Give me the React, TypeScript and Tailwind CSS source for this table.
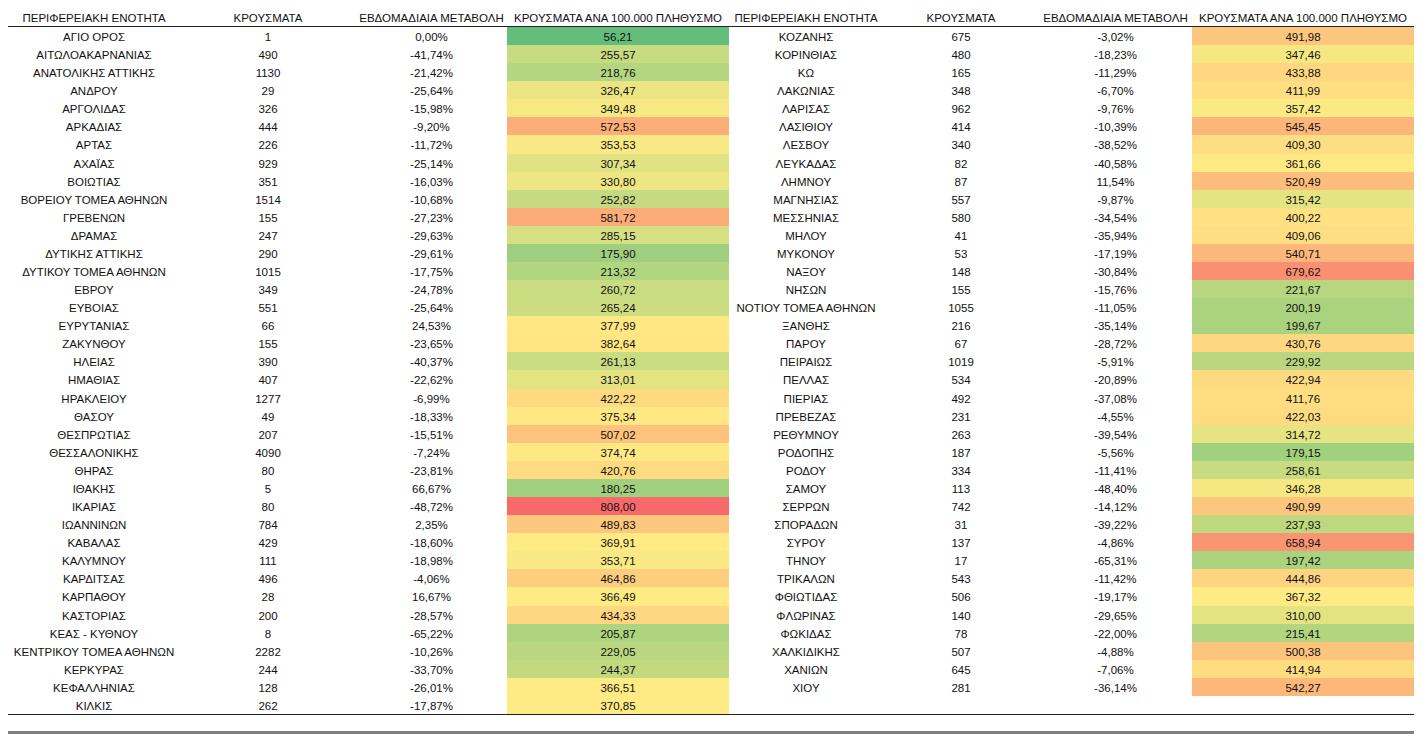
type Row = [string, number, string, string];

const left: Row[] = [
  ["ΑΓΙΟ ΟΡΟΣ", 1, "0,00%", "56,21"],
  ["ΑΙΤΩΛΟΑΚΑΡΝΑΝΙΑΣ", 490, "-41,74%", "255,57"],
  ["ΑΝΑΤΟΛΙΚΗΣ ΑΤΤΙΚΗΣ", 1130, "-21,42%", "218,76"],
  ["ΑΝΔΡΟΥ", 29, "-25,64%", "326,47"],
  ["ΑΡΓΟΛΙΔΑΣ", 326, "-15,98%", "349,48"],
  ["ΑΡΚΑΔΙΑΣ", 444, "-9,20%", "572,53"],
  ["ΑΡΤΑΣ", 226, "-11,72%", "353,53"],
  ["ΑΧΑΪΑΣ", 929, "-25,14%", "307,34"],
  ["ΒΟΙΩΤΙΑΣ", 351, "-16,03%", "330,80"],
  ["ΒΟΡΕΙΟΥ ΤΟΜΕΑ ΑΘΗΝΩΝ", 1514, "-10,68%", "252,82"],
  ["ΓΡΕΒΕΝΩΝ", 155, "-27,23%", "581,72"],
  ["ΔΡΑΜΑΣ", 247, "-29,63%", "285,15"],
  ["ΔΥΤΙΚΗΣ ΑΤΤΙΚΗΣ", 290, "-29,61%", "175,90"],
  ["ΔΥΤΙΚΟΥ ΤΟΜΕΑ ΑΘΗΝΩΝ", 1015, "-17,75%", "213,32"],
  ["ΕΒΡΟΥ", 349, "-24,78%", "260,72"],
  ["ΕΥΒΟΙΑΣ", 551, "-25,64%", "265,24"],
  ["ΕΥΡΥΤΑΝΙΑΣ", 66, "24,53%", "377,99"],
  ["ΖΑΚΥΝΘΟΥ", 155, "-23,65%", "382,64"],
  ["ΗΛΕΙΑΣ", 390, "-40,37%", "261,13"],
  ["ΗΜΑΘΙΑΣ", 407, "-22,62%", "313,01"],
  ["ΗΡΑΚΛΕΙΟΥ", 1277, "-6,99%", "422,22"],
  ["ΘΑΣΟΥ", 49, "-18,33%", "375,34"],
  ["ΘΕΣΠΡΩΤΙΑΣ", 207, "-15,51%", "507,02"],
  ["ΘΕΣΣΑΛΟΝΙΚΗΣ", 4090, "-7,24%", "374,74"],
  ["ΘΗΡΑΣ", 80, "-23,81%", "420,76"],
  ["ΙΘΑΚΗΣ", 5, "66,67%", "180,25"],
  ["ΙΚΑΡΙΑΣ", 80, "-48,72%", "808,00"],
  ["ΙΩΑΝΝΙΝΩΝ", 784, "2,35%", "489,83"],
  ["ΚΑΒΑΛΑΣ", 429, "-18,60%", "369,91"],
  ["ΚΑΛΥΜΝΟΥ", 111, "-18,98%", "353,71"],
  ["ΚΑΡΔΙΤΣΑΣ", 496, "-4,06%", "464,86"],
  ["ΚΑΡΠΑΘΟΥ", 28, "16,67%", "366,49"],
  ["ΚΑΣΤΟΡΙΑΣ", 200, "-28,57%", "434,33"],
  ["ΚΕΑΣ - ΚΥΘΝΟΥ", 8, "-65,22%", "205,87"],
  ["ΚΕΝΤΡΙΚΟΥ ΤΟΜΕΑ ΑΘΗΝΩΝ", 2282, "-10,26%", "229,05"],
  ["ΚΕΡΚΥΡΑΣ", 244, "-33,70%", "244,37"],
  ["ΚΕΦΑΛΛΗΝΙΑΣ", 128, "-26,01%", "366,51"],
  ["ΚΙΛΚΙΣ", 262, "-17,87%", "370,85"],
];

const right: Row[] = [
  ["ΚΟΖΑΝΗΣ", 675, "-3,02%", "491,98"],
  ["ΚΟΡΙΝΘΙΑΣ", 480, "-18,23%", "347,46"],
  ["ΚΩ", 165, "-11,29%", "433,88"],
  ["ΛΑΚΩΝΙΑΣ", 348, "-6,70%", "411,99"],
  ["ΛΑΡΙΣΑΣ", 962, "-9,76%", "357,42"],
  ["ΛΑΣΙΘΙΟΥ", 414, "-10,39%", "545,45"],
  ["ΛΕΣΒΟΥ", 340, "-38,52%", "409,30"],
  ["ΛΕΥΚΑΔΑΣ", 82, "-40,58%", "361,66"],
  ["ΛΗΜΝΟΥ", 87, "11,54%", "520,49"],
  ["ΜΑΓΝΗΣΙΑΣ", 557, "-9,87%", "315,42"],
  ["ΜΕΣΣΗΝΙΑΣ", 580, "-34,54%", "400,22"],
  ["ΜΗΛΟΥ", 41, "-35,94%", "409,06"],
  ["ΜΥΚΟΝΟΥ", 53, "-17,19%", "540,71"],
  ["ΝΑΞΟΥ", 148, "-30,84%", "679,62"],
  ["ΝΗΣΩΝ", 155, "-15,76%", "221,67"],
  ["ΝΟΤΙΟΥ ΤΟΜΕΑ ΑΘΗΝΩΝ", 1055, "-11,05%", "200,19"],
  ["ΞΑΝΘΗΣ", 216, "-35,14%", "199,67"],
  ["ΠΑΡΟΥ", 67, "-28,72%", "430,76"],
  ["ΠΕΙΡΑΙΩΣ", 1019, "-5,91%", "229,92"],
  ["ΠΕΛΛΑΣ", 534, "-20,89%", "422,94"],
  ["ΠΙΕΡΙΑΣ", 492, "-37,08%", "411,76"],
  ["ΠΡΕΒΕΖΑΣ", 231, "-4,55%", "422,03"],
  ["ΡΕΘΥΜΝΟΥ", 263, "-39,54%", "314,72"],
  ["ΡΟΔΟΠΗΣ", 187, "-5,56%", "179,15"],
  ["ΡΟΔΟΥ", 334, "-11,41%", "258,61"],
  ["ΣΑΜΟΥ", 113, "-48,40%", "346,28"],
  ["ΣΕΡΡΩΝ", 742, "-14,12%", "490,99"],
  ["ΣΠΟΡΑΔΩΝ", 31, "-39,22%", "237,93"],
  ["ΣΥΡΟΥ", 137, "-4,86%", "658,94"],
  ["ΤΗΝΟΥ", 17, "-65,31%", "197,42"],
  ["ΤΡΙΚΑΛΩΝ", 543, "-11,42%", "444,86"],
  ["ΦΘΙΩΤΙΔΑΣ", 506, "-19,17%", "367,32"],
  ["ΦΛΩΡΙΝΑΣ", 140, "-29,65%", "310,00"],
  ["ΦΩΚΙΔΑΣ", 78, "-22,00%", "215,41"],
  ["ΧΑΛΚΙΔΙΚΗΣ", 507, "-4,88%", "500,38"],
  ["ΧΑΝΙΩΝ", 645, "-7,06%", "414,94"],
  ["ΧΙΟΥ", 281, "-36,14%", "542,27"],
];

const num = (s: string) => parseFloat(s.replace(",", "."));

// excel style 3-colour scale: min -> 50th percentile -> max
const all = [...left, ...right].map((r) => num(r[3])).sort((a, b) => a - b);
const lo = all[0];
const hi = all[all.length - 1];
const mid = all[Math.floor(all.length / 2)];

const GREEN = [99, 190, 123];
const YELLOW = [255, 235, 132];
const RED = [248, 105, 107];

const mix = (a: number[], b: number[], t: number) =>
  `rgb(${a.map((v, i) => Math.round(v + (b[i] - v) * t)).join(",")})`;

const scaleColor = (v: number) =>
  v <= mid ? mix(GREEN, YELLOW, (v - lo) / (mid - lo)) : mix(YELLOW, RED, (v - mid) / (hi - mid));

const headers = ["ΠΕΡΙΦΕΡΕΙΑΚΗ ΕΝΟΤΗΤΑ", "ΚΡΟΥΣΜΑΤΑ", "ΕΒΔΟΜΑΔΙΑΙΑ ΜΕΤΑΒΟΛΗ", "ΚΡΟΥΣΜΑΤΑ ΑΝΑ 100.000 ΠΛΗΘΥΣΜΟ"];

function Table({ rows, widths }: { rows: Row[]; widths: string[] }) {
  return (
    <div className="flex flex-col">
      {rows.map((r) => (
        <div key={r[0]} className="flex h-[18.08px] items-stretch text-center leading-none">
          <div className={`${widths[0]} whitespace-nowrap pt-[5px]`}>{r[0]}</div>
          <div className={`${widths[1]} pt-[5px]`}>{r[1]}</div>
          <div className={`${widths[2]} pt-[5px]`}>{r[2]}</div>
          <div className={`${widths[3]} pt-[5px]`} style={{ backgroundColor: scaleColor(num(r[3])) }}>
            {r[3]}
          </div>
        </div>
      ))}
    </div>
  );
}

const leftW = ["w-[172px]", "w-[176px]", "w-[151px]", "w-[222px]"];
const rightW = ["w-[154px]", "w-[156px]", "w-[153px]", "w-[222px]"];

export default function App() {
  return (
    <div className="w-[1427px] h-[743px] bg-white pl-2 pt-[9px] font-['Liberation_Sans',Arial,sans-serif] text-[11.5px] text-[#111]">
      <div className="w-[1406px]">
        <div className="flex h-[18px] border-b border-[#222] pt-[4px] text-center leading-none">
          {headers.map((h, i) => (
            <div key={"l" + i} className={`${leftW[i]} whitespace-nowrap`}>{h}</div>
          ))}
          {headers.map((h, i) => (
            <div key={"r" + i} className={`${rightW[i]} whitespace-nowrap`}>{h}</div>
          ))}
        </div>

        <div className="flex items-start">
          <Table rows={left} widths={leftW} />
          <Table rows={right} widths={rightW} />
        </div>

        <div className="border-t border-[#222]" />
      </div>
      <div className="mt-4 h-[3px] w-[1406px] bg-[#7f7f7f]" />
    </div>
  );
}
